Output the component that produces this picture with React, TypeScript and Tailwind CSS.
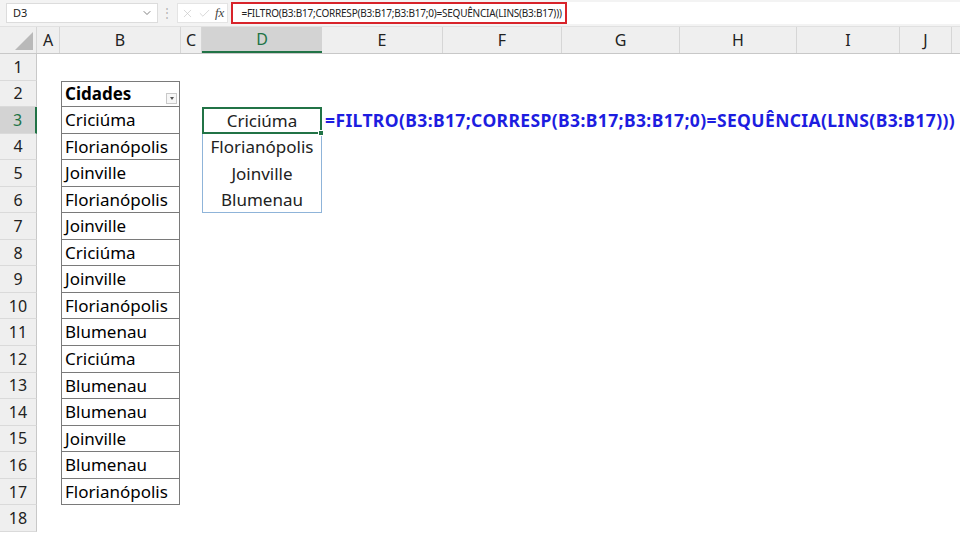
import { ChevronDown, X, Check } from "lucide-react";

const cols = [
  { id: "A", w: "w-[23px]" },
  { id: "B", w: "w-[121px]" },
  { id: "C", w: "w-[21px]" },
  { id: "D", w: "w-[120px]" },
  { id: "E", w: "w-[121px]" },
  { id: "F", w: "w-[119px]" },
  { id: "G", w: "w-[118px]" },
  { id: "H", w: "w-[117px]" },
  { id: "I", w: "w-[103px]" },
  { id: "J", w: "w-[52px]" },
  { id: "", w: "w-[60px]" },
];

const cidades = [
  "Criciúma",
  "Florianópolis",
  "Joinville",
  "Florianópolis",
  "Joinville",
  "Criciúma",
  "Joinville",
  "Florianópolis",
  "Blumenau",
  "Criciúma",
  "Blumenau",
  "Blumenau",
  "Joinville",
  "Blumenau",
  "Florianópolis",
];

const unicas = ["Criciúma", "Florianópolis", "Joinville", "Blumenau"];

const formula = "=FILTRO(B3:B17;CORRESP(B3:B17;B3:B17;0)=SEQUÊNCIA(LINS(B3:B17)))";

function TopBar() {
  return (
    <div className="flex items-center h-[27px] bg-[#f3f3f3] border-b border-[#e1e1e1] pl-[6px]">
      <div className="flex items-center justify-between w-[152px] h-[20px] bg-white border border-[#dcdcdc] pl-[6px] pr-[4px]">
        <span className="text-[11px] text-[#222]">D3</span>
        <ChevronDown size={12} strokeWidth={1.5} className="text-[#555]" />
      </div>
      <span className="ml-[3px] text-[#b5b5b5] text-[12px] leading-none">⋮</span>
      <div className="flex items-center h-[20px] ml-[4px] pl-[3px] pr-[2px] gap-[4px] bg-white border border-[#e4e4e4]">
        <X size={13} strokeWidth={1.2} className="text-[#c4c4c4]" />
        <Check size={13} strokeWidth={1.2} className="text-[#c4c4c4]" />
        <span className="text-[13px] italic text-[#444] font-['Liberation_Serif',serif] pr-[1px]">fx</span>
      </div>
      <div className="flex-1 flex items-center h-[22px] ml-[3px] bg-white">
        <div className="flex items-center h-[22px] w-[336px] border-2 border-[#d8232a] pl-[8px]">
          <span className="text-[10px] text-[#222] whitespace-nowrap tracking-[-0.22px]">{formula}</span>
        </div>
      </div>
    </div>
  );
}

function ColumnHeaders() {
  return (
    <div className="flex h-[27px] bg-[#efefef] border-b border-[#c8c8c8]">
      <div className="w-[37px] shrink-0 flex items-end justify-end pr-[3px] pb-[3px] border-r border-[#d6d6d6]">
        <div className="w-0 h-0 border-l-[18px] border-l-transparent border-b-[18px] border-b-[#b9b9b9]" />
      </div>
      {cols.map((c, i) =>
        c.id === "D" ? (
          <div
            key={i}
            className={`${c.w} shrink-0 flex items-center justify-center bg-[#d3d3d3] border-b-2 border-[#217346] text-[#217346] text-[16px]`}
          >
            {c.id}
          </div>
        ) : (
          <div
            key={i}
            className={`${c.w} shrink-0 flex items-center justify-center border-r border-[#d6d6d6] text-[#222] text-[16px]`}
          >
            {c.id}
          </div>
        )
      )}
    </div>
  );
}

function RowHeader({ n }: { n: number }) {
  const sel = n === 3;
  return (
    <div
      className={`w-[37px] shrink-0 flex items-center justify-center text-[16px] border-b border-[#dadada] ${
        sel ? "bg-[#d3d3d3] text-[#217346] border-r-2 border-r-[#217346]" : "bg-[#efefef] text-[#222] border-r border-r-[#c8c8c8]"
      }`}
    >
      {n}
    </div>
  );
}

function BCell({ row }: { row: number }) {
  if (row < 2 || row > 17) return null;
  if (row === 2) {
    return (
      <div className="relative h-full mx-[1px] border border-[#7a7a7a] flex items-center pl-[3px] font-bold text-[17px] text-black">
        Cidades
        <div className="absolute right-[2px] bottom-[2px] w-[11px] h-[11px] border border-[#c9c9c9] bg-[#f7f7f7] flex items-center justify-center">
          <div className="w-0 h-0 border-l-[2.5px] border-r-[2.5px] border-t-[3px] border-l-transparent border-r-transparent border-t-[#555]" />
        </div>
      </div>
    );
  }
  return (
    <div className="h-full mx-[1px] border-x border-b border-[#7a7a7a] flex items-center pl-[3px] text-[17px] text-black">
      {cidades[row - 3]}
    </div>
  );
}

function DCell({ row }: { row: number }) {
  if (row < 3 || row > 6) return null;
  const v = unicas[row - 3];
  if (row === 3) {
    return (
      <div className="relative h-full border-2 border-[#217346] flex items-center justify-center text-[17px] text-[#222]">
        {v}
        <div className="absolute right-[-4px] bottom-[-4px] w-[6px] h-[6px] bg-[#217346] border border-white" />
      </div>
    );
  }
  return (
    <div
      className={`h-full border-x border-[#8fb4d9] flex items-center justify-center text-[17px] text-[#222] ${
        row === 6 ? "border-b" : ""
      }`}
    >
      {v}
    </div>
  );
}

function Row({ n }: { n: number }) {
  return (
    <div className="flex h-[26.55px]">
      <RowHeader n={n} />
      {cols.map((c, i) => (
        <div key={i} className={`${c.w} shrink-0 h-full`}>
          {c.id === "B" && <BCell row={n} />}
          {c.id === "D" && <DCell row={n} />}
          {c.id === "E" && n === 3 && (
            <div className="h-full flex items-center pl-[3px] whitespace-nowrap font-bold text-[17.5px] text-[#1d1de0] tracking-[0.38px]">
              {formula}
            </div>
          )}
        </div>
      ))}
    </div>
  );
}

export default function App() {
  const rows = Array.from({ length: 18 }, (_, i) => i + 1);
  return (
    <div className="w-[960px] h-[535px] overflow-hidden bg-white font-['Noto_Sans','Open_Sans',sans-serif]">
      <TopBar />
      <ColumnHeaders />
      {rows.map((n) => (
        <Row key={n} n={n} />
      ))}
    </div>
  );
}
